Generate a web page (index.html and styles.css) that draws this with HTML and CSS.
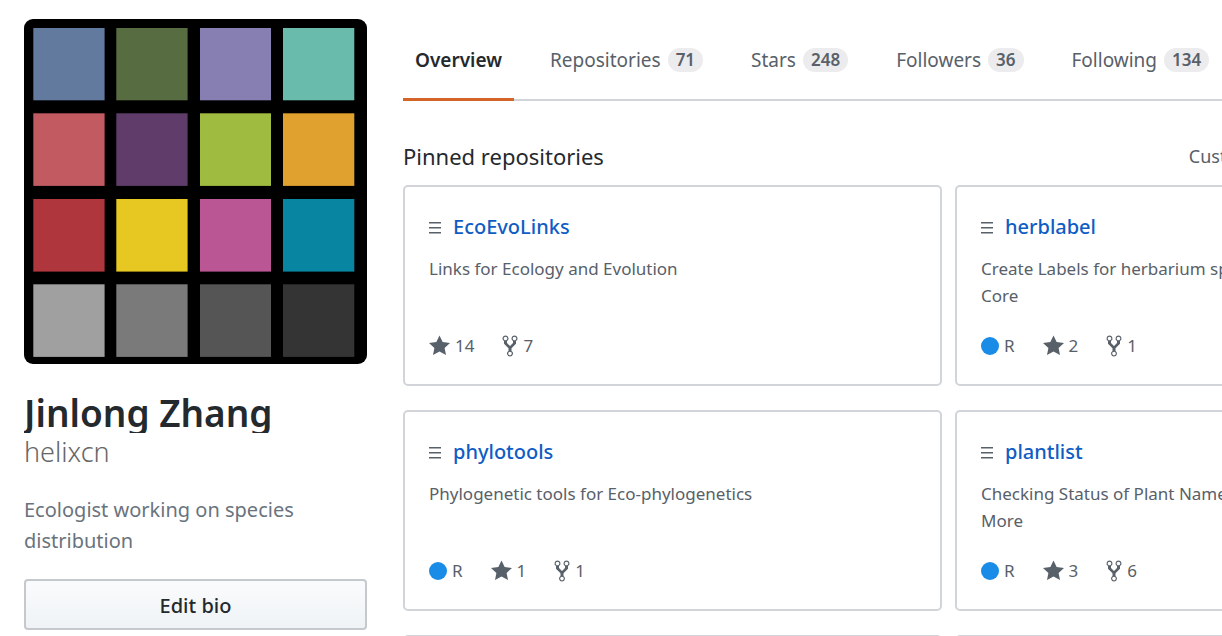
FILE: index.html
```html
<!DOCTYPE html>
<html lang="en">
<head>
<meta charset="utf-8">
<title>helixcn (Jinlong Zhang)</title>
<link rel="stylesheet" href="styles.css">
</head>
<body>
<svg class="sprite" aria-hidden="true">
  <symbol id="grabber" viewBox="0 0 12 13"><path d="M0 1h12v1.5H0zM0 6h12v1.5H0zM0 11h12v1.5H0z"/></symbol>
  <symbol id="star" viewBox="0 0 14 16"><path d="M14 6l-4.9-.64L7 1 4.9 5.36 0 6l3.6 3.26L2.67 14 7 11.67 11.33 14l-.93-4.74L14 6z"/></symbol>
  <symbol id="fork" viewBox="0 0 10 16"><path fill-rule="evenodd" d="M8 1a1.993 1.993 0 0 0-1 3.72V6L5 8 3 6V4.72A1.993 1.993 0 0 0 2 1a1.993 1.993 0 0 0-1 3.72V6.5l3 3v1.78A1.993 1.993 0 0 0 5 15a1.993 1.993 0 0 0 1-3.72V9.5l3-3V4.72A1.993 1.993 0 0 0 8 1zM2 4.2C1.34 4.2.8 3.65.8 3c0-.65.55-1.2 1.2-1.2.65 0 1.2.55 1.2 1.2 0 .65-.55 1.2-1.2 1.2zm3 10c-.66 0-1.2-.55-1.2-1.2 0-.65.55-1.2 1.2-1.2.65 0 1.2.55 1.2 1.2 0 .65-.55 1.2-1.2 1.2zm3-10c-.66 0-1.2-.55-1.2-1.2 0-.65.55-1.2 1.2-1.2.65 0 1.2.55 1.2 1.2 0 .65-.55 1.2-1.2 1.2z"/></symbol>
</svg>
<div class="page">
  <aside class="profile">
    <svg class="avatar" viewBox="0 0 343 345" role="img" aria-label="Avatar">
      <rect width="343" height="345" fill="#000"/>
      <rect x="9.3" y="9" width="71.3" height="72.3" fill="#637a9f"/>
      <rect x="92.3" y="9" width="71.3" height="72.3" fill="#586c42"/>
      <rect x="176" y="9" width="71" height="72.3" fill="#877fb1"/>
      <rect x="259" y="9" width="71.3" height="72.3" fill="#69bbab"/>
      <rect x="9.3" y="94.3" width="71.3" height="72.6" fill="#c25a62"/>
      <rect x="92.3" y="94.3" width="71.3" height="72.6" fill="#5f3c6a"/>
      <rect x="176" y="94.3" width="71" height="72.6" fill="#9fbc41"/>
      <rect x="259" y="94.3" width="71.3" height="72.6" fill="#e1a12e"/>
      <rect x="9.3" y="180" width="71.3" height="72.6" fill="#ae363c"/>
      <rect x="92.3" y="180" width="71.3" height="72.6" fill="#e7c721"/>
      <rect x="176" y="180" width="71" height="72.6" fill="#b95693"/>
      <rect x="259" y="180" width="71.3" height="72.6" fill="#0885a1"/>
      <rect x="9.3" y="265.3" width="71.3" height="72.6" fill="#a0a0a0"/>
      <rect x="92.3" y="265.3" width="71.3" height="72.6" fill="#7a7a7a"/>
      <rect x="176" y="265.3" width="71" height="72.6" fill="#555"/>
      <rect x="259" y="265.3" width="71.3" height="72.6" fill="#343434"/>
    </svg>
    <h1 class="names"><span class="fullname">Jinlong Zhang</span><span class="username">helixcn</span></h1>
    <p class="bio">Ecologist working on species distribution</p>
    <button class="edit" type="button">Edit bio</button>
  </aside>
  <main class="content">
    <nav class="tabs">
      <a class="tab selected" href="#overview">Overview</a>
      <a class="tab" href="#repositories">Repositories <span class="counter">71</span></a>
      <a class="tab" href="#stars">Stars <span class="counter">248</span></a>
      <a class="tab" href="#followers">Followers <span class="counter">36</span></a>
      <a class="tab" href="#following">Following <span class="counter">134</span></a>
    </nav>
    <div class="heading">
      <h2 class="title">Pinned repositories</h2>
      <a class="customize" href="#customize">Customize your pinned repositories</a>
    </div>
    <div class="grid">
      <article class="card">
        <h3 class="repo"><svg class="grabber"><use href="#grabber"/></svg><a class="link" href="#EcoEvoLinks">EcoEvoLinks</a></h3>
        <p class="desc">Links for Ecology and Evolution</p>
        <div class="stats">
          <span class="stat"><svg class="star"><use href="#star"/></svg>14</span>
          <span class="stat"><svg class="fork"><use href="#fork"/></svg>7</span>
        </div>
      </article>
      <article class="card">
        <h3 class="repo"><svg class="grabber"><use href="#grabber"/></svg><a class="link" href="#herblabel">herblabel</a></h3>
        <p class="desc">Create Labels for herbarium specimens following Darwin Core</p>
        <div class="stats">
          <span class="stat"><i class="lang"></i>R</span>
          <span class="stat"><svg class="star"><use href="#star"/></svg>2</span>
          <span class="stat"><svg class="fork"><use href="#fork"/></svg>1</span>
        </div>
      </article>
      <article class="card">
        <h3 class="repo"><svg class="grabber"><use href="#grabber"/></svg><a class="link" href="#phylotools">phylotools</a></h3>
        <p class="desc">Phylogenetic tools for Eco-phylogenetics</p>
        <div class="stats">
          <span class="stat"><i class="lang"></i>R</span>
          <span class="stat"><svg class="star"><use href="#star"/></svg>1</span>
          <span class="stat"><svg class="fork"><use href="#fork"/></svg>1</span>
        </div>
      </article>
      <article class="card">
        <h3 class="repo"><svg class="grabber"><use href="#grabber"/></svg><a class="link" href="#plantlist">plantlist</a></h3>
        <p class="desc">Checking Status of Plant Names using The Plant List and More</p>
        <div class="stats">
          <span class="stat"><i class="lang"></i>R</span>
          <span class="stat"><svg class="star"><use href="#star"/></svg>3</span>
          <span class="stat"><svg class="fork"><use href="#fork"/></svg>6</span>
        </div>
      </article>
      <article class="card"></article>
      <article class="card"></article>
    </div>
  </main>
</div>
</body>
</html>
```
FILE: styles.css
```css
* { box-sizing: border-box; }
html { height: 100%; overflow: hidden; }
body {
  margin: 0;
  height: 100%;
  overflow: hidden;
  background: #fff;
  color: #24292e;
  font-family: "Noto Sans", "Open Sans", sans-serif;
  font-size: 17px;
  line-height: 27px;
}
h1, h2, h3, p { margin: 0; font-weight: 400; }
a { color: inherit; text-decoration: none; }
svg { flex: none; fill: currentColor; }
.sprite { display: none; }
.page {
  display: flex;
  gap: 36px;
  min-width: 1518px;
  padding: 19px 24px;
}
.profile { flex: none; width: 343px; }
.avatar { display: block; width: 100%; border-radius: 9px; }
.names { margin-top: 29px; }
.fullname {
  display: block;
  overflow: hidden;
  font-size: 37px;
  font-weight: 600;
  line-height: 40px;
}
.username {
  display: block;
  color: #666;
  font-size: 27px;
  font-weight: 300;
  line-height: 38px;
}
.bio {
  margin: 23px 0;
  padding-right: 36px;
  color: #6a737d;
  font-size: 20px;
  line-height: 31px;
}
.edit {
  display: block;
  width: 100%;
  height: 51px;
  padding: 2px 0 0;
  border: 2px solid #c5c9cd;
  border-radius: 4px;
  background: linear-gradient(#fafbfc, #eff3f6);
  color: #24292e;
  font: 500 20px "Noto Sans", "Open Sans", sans-serif;
}
.content { flex: 1; min-width: 0; }
.tabs {
  display: flex;
  gap: 24px;
  height: 82px;
  border-bottom: 2px solid #d1d5da;
}
.tab {
  display: flex;
  align-items: center;
  gap: 7px;
  height: 82px;
  padding: 3px 12px 0;
  border-bottom: 3px solid transparent;
  color: #586069;
  font-size: 19px;
}
.selected { border-color: #d26527; color: #24292e; font-weight: 600; }
.counter {
  padding: 0 8px;
  border-radius: 12px;
  background: #ececee;
  font-size: 17px;
  font-weight: 600;
  line-height: 24px;
}
.heading {
  display: flex;
  justify-content: space-between;
  align-items: center;
  margin: 37px 0 11px;
}
.title { font-size: 22px; line-height: 36px; }
.customize { padding-right: 4px; color: #586069; font-size: 18px; }
.grid {
  display: grid;
  grid-template-columns: 1fr 1fr;
  gap: 24px 13px;
}
.card {
  display: flex;
  flex-direction: column;
  min-height: 201px;
  padding: 24px;
  border: 2px solid #d1d5da;
  border-radius: 5px;
}
.repo {
  display: flex;
  align-items: center;
  gap: 12px;
  color: #586069;
  font-size: 20px;
  line-height: 32px;
}
.link { color: #0f5dc4; font-weight: 500; }
.grabber { width: 12px; height: 13px; }
.desc { min-height: 54px; margin: 12px 0 23px; color: #586069; }
.stats { display: flex; gap: 28px; color: #586069; }
.stat { display: flex; align-items: center; gap: 5px; }
.lang { width: 18px; height: 18px; border-radius: 50%; background: #198ce7; }
.star { width: 21px; height: 24px; }
.fork { width: 16px; height: 24px; }
```
